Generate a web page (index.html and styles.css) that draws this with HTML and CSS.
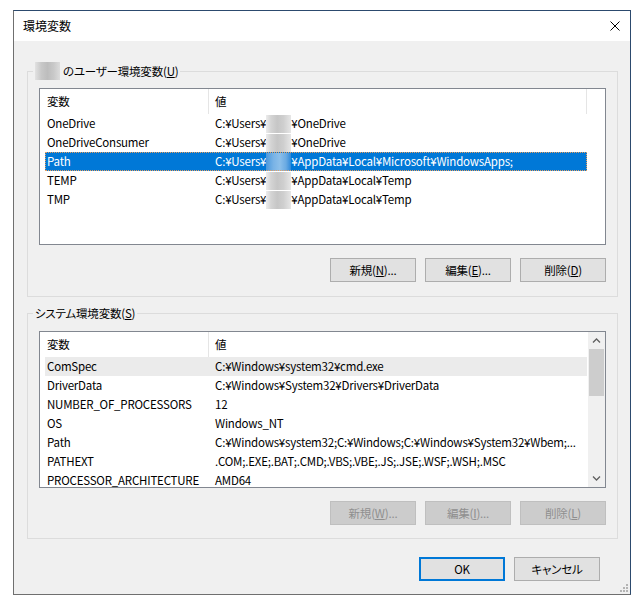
FILE: index.html
```html
<!DOCTYPE html>
<html lang="ja">
<head>
<meta charset="utf-8">
<title>環境変数</title>
<link rel="stylesheet" href="styles.css">
</head>
<body>
<div class="window">
  <div class="titlebar">
    <span class="title">環境変数</span>
    <span class="close">
      <svg width="10" height="10" viewBox="0 0 10 10"><path d="M0.5 0.5 L9.5 9.5 M9.5 0.5 L0.5 9.5" stroke="#000" stroke-width="1" fill="none"/></svg>
    </span>
  </div>
  <div class="client">
    <fieldset class="group group-user">
      <legend><span class="blur blur-legend"></span>のユーザー環境変数(<u>U</u>)</legend>
      <div class="list">
        <div class="list-body">
          <div class="list-header">
            <div class="hcell hcell-name">変数</div>
            <div class="hcell hcell-value">値</div>
          </div>
          <div class="row"><div class="cell-name">OneDrive</div><div class="cell-value">C:¥Users¥<span class="blur"></span>¥OneDrive</div></div>
          <div class="row"><div class="cell-name">OneDriveConsumer</div><div class="cell-value">C:¥Users¥<span class="blur"></span>¥OneDrive</div></div>
          <div class="row row-selected"><div class="cell-name">Path</div><div class="cell-value">C:¥Users¥<span class="blur blur-sel"></span>¥AppData¥Local¥Microsoft¥WindowsApps;</div></div>
          <div class="row"><div class="cell-name">TEMP</div><div class="cell-value">C:¥Users¥<span class="blur"></span>¥AppData¥Local¥Temp</div></div>
          <div class="row"><div class="cell-name">TMP</div><div class="cell-value">C:¥Users¥<span class="blur"></span>¥AppData¥Local¥Temp</div></div>
        </div>
      </div>
      <div class="buttons">
        <button class="btn">新規(<u>N</u>)...</button>
        <button class="btn">編集(<u>E</u>)...</button>
        <button class="btn">削除(<u>D</u>)</button>
      </div>
    </fieldset>

    <fieldset class="group group-system">
      <legend>システム環境変数(<u>S</u>)</legend>
      <div class="list">
        <div class="list-body">
          <div class="list-header">
            <div class="hcell hcell-name">変数</div>
            <div class="hcell hcell-value hcell-last">値</div>
          </div>
          <div class="row row-inactive"><div class="cell-name">ComSpec</div><div class="cell-value">C:¥Windows¥system32¥cmd.exe</div></div>
          <div class="row"><div class="cell-name">DriverData</div><div class="cell-value">C:¥Windows¥System32¥Drivers¥DriverData</div></div>
          <div class="row"><div class="cell-name">NUMBER_OF_PROCESSORS</div><div class="cell-value">12</div></div>
          <div class="row"><div class="cell-name">OS</div><div class="cell-value">Windows_NT</div></div>
          <div class="row"><div class="cell-name">Path</div><div class="cell-value">C:¥Windows¥system32;C:¥Windows;C:¥Windows¥System32¥Wbem;...</div></div>
          <div class="row"><div class="cell-name">PATHEXT</div><div class="cell-value">.COM;.EXE;.BAT;.CMD;.VBS;.VBE;.JS;.JSE;.WSF;.WSH;.MSC</div></div>
          <div class="row"><div class="cell-name">PROCESSOR_ARCHITECTURE</div><div class="cell-value">AMD64</div></div>
        </div>
        <div class="scrollbar">
          <div class="sb-arrow">
            <svg width="17" height="17" viewBox="0 0 17 17"><polyline points="5,10.5 8.5,7 12,10.5" fill="none" stroke="#606060" stroke-width="1.3"/></svg>
          </div>
          <div class="sb-track"><div class="sb-thumb"></div></div>
          <div class="sb-arrow">
            <svg width="17" height="17" viewBox="0 0 17 17"><polyline points="5,6.5 8.5,10 12,6.5" fill="none" stroke="#606060" stroke-width="1.3"/></svg>
          </div>
        </div>
      </div>
      <div class="buttons">
        <button class="btn" disabled>新規(<u>W</u>)...</button>
        <button class="btn" disabled>編集(<u>I</u>)...</button>
        <button class="btn" disabled>削除(<u>L</u>)</button>
      </div>
    </fieldset>

    <div class="footer">
      <button class="btn btn-default">OK</button>
      <button class="btn">キャンセル</button>
    </div>
  </div>
  <svg class="grip" width="10" height="10" viewBox="0 0 10 10">
    <rect x="7" y="1" width="2" height="2" fill="#b4b4b4"/>
    <rect x="4" y="4" width="2" height="2" fill="#b4b4b4"/>
    <rect x="7" y="4" width="2" height="2" fill="#b4b4b4"/>
    <rect x="1" y="7" width="2" height="2" fill="#b4b4b4"/>
    <rect x="4" y="7" width="2" height="2" fill="#b4b4b4"/>
    <rect x="7" y="7" width="2" height="2" fill="#b4b4b4"/>
  </svg>
</div>
</body>
</html>
```

FILE: styles.css
```css
* {
  box-sizing: border-box;
}

html, body {
  margin: 0;
  padding: 0;
  background: #ffffff;
}

body {
  font-family: "Noto Sans CJK JP", "Noto Sans", sans-serif;
  font-size: 11.5px;
  color: #000000;
  font-feature-settings: "palt";
  letter-spacing: -0.2px;
}

.window {
  position: relative;
  margin: 10px 0 0 13px;
  width: 618px;
  height: 585px;
  border: 1px solid #6f6f6f;
  border-top-color: #2c4a6e;
  border-right-color: #2c4a6e;
  background: #f0f0f0;
  display: flex;
  flex-direction: column;
}

.titlebar {
  height: 30px;
  flex: none;
  background: #ffffff;
  display: flex;
  align-items: center;
  padding-left: 9px;
}

.title {
  flex: 1;
  line-height: 16px;
  font-size: 12px;
  letter-spacing: 0;
}

.close {
  width: 30px;
  height: 30px;
  display: flex;
  align-items: center;
  justify-content: center;
}

.close svg {
  display: block;
}

.client {
  flex: 1;
  padding: 21px 12px 0 13px;
}

.group {
  margin: 0;
  min-width: 0;
  border: 1px solid #dcdcdc;
  padding: 8px 11px 14px 11px;
}

.group-system {
  margin-top: 7px;
  padding-top: 9px;
  padding-bottom: 13px;
}

.group legend {
  padding: 0 2px;
  margin-left: -6px;
  height: 18px;
  line-height: 18px;
  display: flex;
  align-items: center;
}

.blur {
  display: inline-block;
  width: 25px;
  height: 18px;
  vertical-align: middle;
  background: linear-gradient(90deg, #ececec 0%, #d4d4d4 20%, #c6c6c6 45%, #cfcfcf 70%, #e6e6e6 100%);
}

.blur-legend {
  margin-right: 3px;
  background: linear-gradient(90deg, #e2e2e2 0%, #c8c8c8 25%, #bdbdbd 50%, #c9c9c9 75%, #dcdcdc 100%);
}

.blur-sel {
  background: linear-gradient(90deg, #4b98dc 0%, #79b3e6 30%, #8cbfea 55%, #6aaae2 80%, #2f88d9 100%);
}

.list {
  height: 157px;
  border: 1px solid #828790;
  background: #ffffff;
  display: flex;
  overflow: hidden;
}

.list-body {
  flex: 1;
  overflow: hidden;
}

.list-header {
  display: flex;
  height: 25px;
}

.hcell {
  line-height: 25px;
  border-right: 1px solid #e5e5e5;
  white-space: nowrap;
}

.hcell-name {
  width: 169px;
  padding-left: 7px;
}

.hcell-value {
  width: 378px;
  padding-left: 6px;
}

.hcell-last {
  border-right: none;
}

.row {
  display: flex;
  margin-left: 5px;
  width: 542px;
  height: 19px;
  line-height: 19px;
  white-space: nowrap;
}

.cell-name {
  width: 163px;
  padding-left: 2px;
  overflow: hidden;
}

.cell-value {
  flex: 1;
  padding-left: 7px;
  overflow: hidden;
  display: flex;
  align-items: center;
}

.row-selected {
  background: #0078d7;
  color: #ffffff;
  outline: 1px dotted #e8a060;
  outline-offset: -1px;
}

.row-inactive {
  background: #ebebeb;
}

.scrollbar {
  width: 17px;
  flex: none;
  background: #f0f0f0;
  display: flex;
  flex-direction: column;
}

.sb-arrow {
  height: 17px;
  flex: none;
}

.sb-arrow svg {
  display: block;
}

.sb-track {
  flex: 1;
}

.sb-thumb {
  margin: 0 1px;
  height: 47px;
  background: #cdcdcd;
}

.buttons {
  display: flex;
  justify-content: flex-end;
  gap: 9px;
  margin-top: 13px;
}

.btn {
  width: 86px;
  height: 24px;
  padding: 0;
  margin: 0;
  border: 1px solid #adadad;
  background: #e1e1e1;
  font-family: inherit;
  font-size: 11.5px;
  letter-spacing: -0.2px;
  font-feature-settings: "palt";
  color: #000000;
  line-height: 16px;
  display: flex;
  align-items: center;
  justify-content: center;
}

.btn:disabled {
  background: #cccccc;
  border-color: #bfbfbf;
  color: #8f8f8f;
}

.btn-default {
  border: 2px solid #0078d7;
}

.footer {
  display: flex;
  justify-content: flex-end;
  gap: 9px;
  margin-top: 18px;
  padding-right: 18px;
}

.grip {
  position: absolute;
  right: 1px;
  bottom: 1px;
}
```
